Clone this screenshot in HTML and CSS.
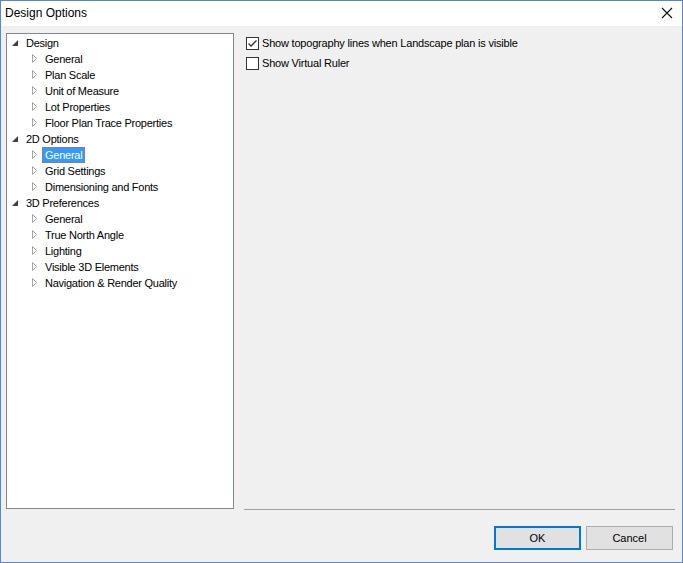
FILE: index.html
```html
<!DOCTYPE html>
<html>
<head>
<meta charset="utf-8">
<link rel="stylesheet" href="styles.css">
</head>
<body>
<div class="window">
  <div class="titlebar">
    <span class="title">Design Options</span>
    <svg class="close" width="12" height="12" viewBox="0 0 12 12"><path d="M1 1 L11 11 M11 1 L1 11" stroke="#111" stroke-width="1.1" fill="none"/></svg>
  </div>
  <div class="content">
    <div class="main">
      <div class="tree">
        <div class="row"><span class="arrow"><svg width="16" height="16" viewBox="0 0 16 16"><path d="M11 5 L11 11 L5 11 Z" fill="#404040"/></svg></span><span class="label">Design</span></div>
        <div class="row child"><span class="arrow"><svg width="16" height="16" viewBox="0 0 16 16"><path d="M6.5 3.5 L10.5 7.5 L6.5 11.5 Z" fill="none" stroke="#a6a6a6"/></svg></span><span class="label">General</span></div>
        <div class="row child"><span class="arrow"><svg width="16" height="16" viewBox="0 0 16 16"><path d="M6.5 3.5 L10.5 7.5 L6.5 11.5 Z" fill="none" stroke="#a6a6a6"/></svg></span><span class="label">Plan Scale</span></div>
        <div class="row child"><span class="arrow"><svg width="16" height="16" viewBox="0 0 16 16"><path d="M6.5 3.5 L10.5 7.5 L6.5 11.5 Z" fill="none" stroke="#a6a6a6"/></svg></span><span class="label">Unit of Measure</span></div>
        <div class="row child"><span class="arrow"><svg width="16" height="16" viewBox="0 0 16 16"><path d="M6.5 3.5 L10.5 7.5 L6.5 11.5 Z" fill="none" stroke="#a6a6a6"/></svg></span><span class="label">Lot Properties</span></div>
        <div class="row child"><span class="arrow"><svg width="16" height="16" viewBox="0 0 16 16"><path d="M6.5 3.5 L10.5 7.5 L6.5 11.5 Z" fill="none" stroke="#a6a6a6"/></svg></span><span class="label">Floor Plan Trace Properties</span></div>
        <div class="row"><span class="arrow"><svg width="16" height="16" viewBox="0 0 16 16"><path d="M11 5 L11 11 L5 11 Z" fill="#404040"/></svg></span><span class="label">2D Options</span></div>
        <div class="row child"><span class="arrow"><svg width="16" height="16" viewBox="0 0 16 16"><path d="M6.5 3.5 L10.5 7.5 L6.5 11.5 Z" fill="none" stroke="#a6a6a6"/></svg></span><span class="label selected">General</span></div>
        <div class="row child"><span class="arrow"><svg width="16" height="16" viewBox="0 0 16 16"><path d="M6.5 3.5 L10.5 7.5 L6.5 11.5 Z" fill="none" stroke="#a6a6a6"/></svg></span><span class="label">Grid Settings</span></div>
        <div class="row child"><span class="arrow"><svg width="16" height="16" viewBox="0 0 16 16"><path d="M6.5 3.5 L10.5 7.5 L6.5 11.5 Z" fill="none" stroke="#a6a6a6"/></svg></span><span class="label">Dimensioning and Fonts</span></div>
        <div class="row"><span class="arrow"><svg width="16" height="16" viewBox="0 0 16 16"><path d="M11 5 L11 11 L5 11 Z" fill="#404040"/></svg></span><span class="label">3D Preferences</span></div>
        <div class="row child"><span class="arrow"><svg width="16" height="16" viewBox="0 0 16 16"><path d="M6.5 3.5 L10.5 7.5 L6.5 11.5 Z" fill="none" stroke="#a6a6a6"/></svg></span><span class="label">General</span></div>
        <div class="row child"><span class="arrow"><svg width="16" height="16" viewBox="0 0 16 16"><path d="M6.5 3.5 L10.5 7.5 L6.5 11.5 Z" fill="none" stroke="#a6a6a6"/></svg></span><span class="label">True North Angle</span></div>
        <div class="row child"><span class="arrow"><svg width="16" height="16" viewBox="0 0 16 16"><path d="M6.5 3.5 L10.5 7.5 L6.5 11.5 Z" fill="none" stroke="#a6a6a6"/></svg></span><span class="label">Lighting</span></div>
        <div class="row child"><span class="arrow"><svg width="16" height="16" viewBox="0 0 16 16"><path d="M6.5 3.5 L10.5 7.5 L6.5 11.5 Z" fill="none" stroke="#a6a6a6"/></svg></span><span class="label">Visible 3D Elements</span></div>
        <div class="row child"><span class="arrow"><svg width="16" height="16" viewBox="0 0 16 16"><path d="M6.5 3.5 L10.5 7.5 L6.5 11.5 Z" fill="none" stroke="#a6a6a6"/></svg></span><span class="label">Navigation &amp; Render Quality</span></div>
      </div>
      <div class="panel">
        <div class="option">
          <span class="box"><svg width="11" height="11" viewBox="0 0 11 11"><path d="M1.5 5.5 L4 8 L9.5 2.5" stroke="#333" stroke-width="1.3" fill="none"/></svg></span>
          <span class="otext">Show topography lines when Landscape plan is visible</span>
        </div>
        <div class="option">
          <span class="box"></span>
          <span class="otext">Show Virtual Ruler</span>
        </div>
      </div>
    </div>
    <div class="footer">
      <button class="btn default">OK</button>
      <button class="btn">Cancel</button>
    </div>
  </div>
</div>
</body>
</html>
```
FILE: styles.css
```css
html, body {
  margin: 0;
  padding: 0;
}
body {
  width: 683px;
  height: 563px;
  overflow: hidden;
  font-family: "Liberation Sans", Arial, sans-serif;
  font-size: 11px;
  color: #000;
}
.window {
  box-sizing: border-box;
  width: 683px;
  height: 563px;
  border: 1px solid #5a86cf;
  background: #f0f0f0;
  display: flex;
  flex-direction: column;
}
.titlebar {
  height: 25px;
  background: #fff;
  display: flex;
  align-items: center;
  justify-content: space-between;
  padding: 0 9px 0 4px;
  flex: none;
}
.title {
  font-size: 12px;
  padding-bottom: 1px;
}
.close {
  display: block;
  margin-bottom: 1px;
}
.content {
  flex: 1;
  display: flex;
  flex-direction: column;
  padding: 7px 7px 0 5px;
}
.main {
  display: flex;
}
.tree {
  box-sizing: border-box;
  width: 228px;
  height: 476px;
  background: #fff;
  border: 1px solid #828790;
  padding-top: 1px;
  flex: none;
}
.row {
  height: 16px;
  display: flex;
  align-items: center;
}
.row.child {
  padding-left: 19px;
}
.arrow {
  width: 16px;
  height: 16px;
  flex: none;
}
.arrow svg {
  display: block;
}
.label {
  border: 1px dotted transparent;
  padding: 0 2px;
  height: 14px;
  line-height: 14px;
  white-space: nowrap;
  letter-spacing: -0.25px;
}
.label.selected {
  background: #3399ff;
  color: #fff;
  border: 1px dotted #c07020;
}
.panel {
  flex: 1;
  margin-left: 10px;
  height: 477px;
  box-sizing: border-box;
  border-bottom: 1px solid #a0a0a0;
  padding: 0 0 0 2px;
}
.option {
  display: flex;
  align-items: center;
  height: 20px;
}
.box {
  box-sizing: border-box;
  width: 13px;
  height: 13px;
  border: 1px solid #333;
  background: #fff;
  margin-right: 3px;
  flex: none;
}
.box svg {
  display: block;
}
.otext {
  white-space: nowrap;
  letter-spacing: -0.2px;
}
.footer {
  display: flex;
  justify-content: flex-end;
  gap: 5px;
  margin-top: 16px;
  padding-right: 2px;
}
.btn {
  box-sizing: border-box;
  width: 87px;
  height: 24px;
  background: #e1e1e1;
  border: 1px solid #adadad;
  font-family: "Liberation Sans", Arial, sans-serif;
  font-size: 11px;
  color: #000;
  padding: 0;
  margin: 0;
}
.btn.default {
  border: 2px solid #0078d7;
}
```
